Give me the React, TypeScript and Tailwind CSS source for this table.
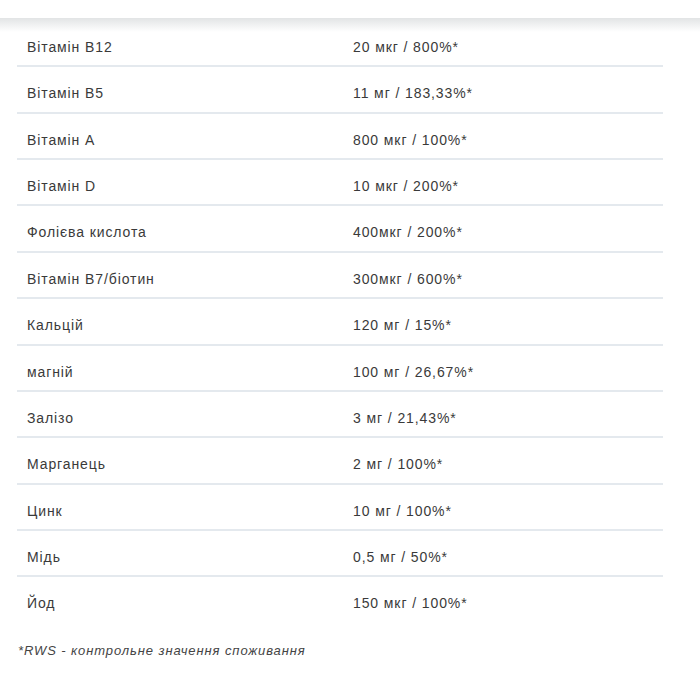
const rows: [string, string][] = [
  ['Вітамін B12', '20 мкг / 800%*'],
  ['Вітамін B5', '11 мг / 183,33%*'],
  ['Вітамін А', '800 мкг / 100%*'],
  ['Вітамін D', '10 мкг / 200%*'],
  ['Фолієва кислота', '400мкг / 200%*'],
  ['Вітамін B7/біотин', '300мкг / 600%*'],
  ['Кальцій', '120 мг / 15%*'],
  ['магній', '100 мг / 26,67%*'],
  ['Залізо', '3 мг / 21,43%*'],
  ['Марганець', '2 мг / 100%*'],
  ['Цинк', '10 мг / 100%*'],
  ['Мідь', '0,5 мг / 50%*'],
  ['Йод', '150 мкг / 100%*'],
];

export default function App() {
  return (
    <div className="w-[700px] h-[700px] bg-white font-['Liberation_Sans',Arial,sans-serif] text-[#3a3a3a] tracking-[0.9px]">
      <div className="h-[18px] bg-white" />
      <div className="pt-[3px] px-[17px] bg-[linear-gradient(to_bottom,#e2e4e5,#ffffff_14px)]">
        <div className="w-[646px]">
          {rows.map(([name, value], i) => (
            <div
              key={name}
              className={
                'grid grid-cols-[326px_1fr] text-[14px] leading-4 ' +
                (i < rows.length - 1 ? 'border-b-2 border-[#e4e9ee]' : '')
              }
            >
              <div className="pl-[10px] pt-[18px] pb-[10.36px]">{name}</div>
              <div className="pl-[10px] pt-[18px] pb-[10.36px]">{value}</div>
            </div>
          ))}
        </div>
        <p className="mt-[21px] text-[13px] italic text-[#444] leading-4 pl-px">
          *RWS - контрольне значення споживання
        </p>
      </div>
    </div>
  );
}
